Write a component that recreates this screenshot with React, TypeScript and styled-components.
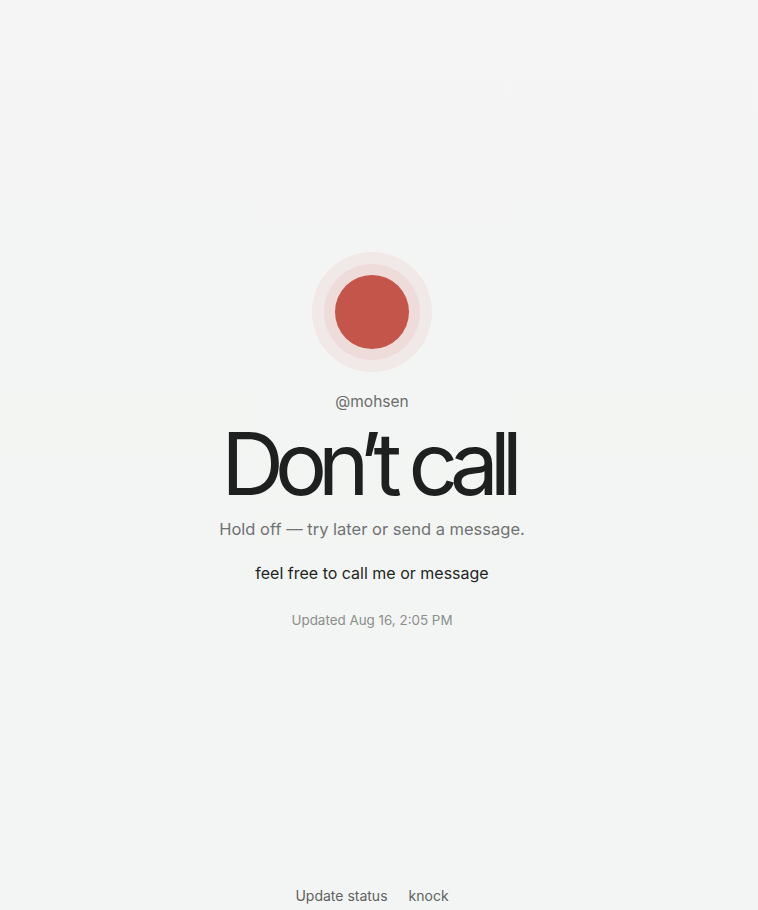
import { createGlobalStyle } from "styled-components";
import styled from "styled-components";

const GlobalStyle = createGlobalStyle`
  html, body {
    margin: 0;
    padding: 0;
    background: #f3f5f4;
  }
  body {
    font-family: Inter, "Noto Sans", sans-serif;
    -webkit-font-smoothing: antialiased;
  }
`;

const Page = styled.div`
  min-height: 910px;
  box-sizing: border-box;
  padding-right: 14px;
  display: flex;
  flex-direction: column;
  background: linear-gradient(180deg, #f4f5f4 0%, #f2f5f3 100%);
`;

const Main = styled.main`
  flex: 1;
  display: flex;
  flex-direction: column;
  align-items: center;
  justify-content: center;
  text-align: center;
  padding-bottom: 6px;
`;

const Halo = styled.div`
  width: 120px;
  height: 120px;
  border-radius: 50%;
  background: #f0e9e8;
  display: flex;
  align-items: center;
  justify-content: center;
`;

const Ring = styled.div`
  width: 96px;
  height: 96px;
  border-radius: 50%;
  background: #eedcdb;
  display: flex;
  align-items: center;
  justify-content: center;
`;

const Dot = styled.div<{ $color: string }>`
  width: 74px;
  height: 74px;
  border-radius: 50%;
  background: ${(p) => p.$color};
`;

const Handle = styled.div`
  margin-top: 21px;
  font-size: 15.5px;
  line-height: 18px;
  color: #6a6d6b;
`;

const Title = styled.h1`
  margin: 9px 0 0;
  font-size: 87px;
  font-weight: 430;
  letter-spacing: -0.104em;
  line-height: 1;
  color: #1d201e;
  padding-right: 0.104em;
`;

const Subtitle = styled.p`
  margin: 12px 0 0;
  font-size: 16.5px;
  color: #707371;
`;

const Note = styled.p`
  margin: 24px 0 0;
  font-size: 16px;
  color: #232524;
`;

const Updated = styled.p`
  margin: 29px 0 0;
  font-size: 13.4px;
  color: #8b8e8c;
`;

const Footer = styled.footer`
  display: flex;
  justify-content: center;
  gap: 21px;
  padding-bottom: 4px;
`;

const FooterLink = styled.a`
  font-size: 14px;
  color: #5f6260;
  text-decoration: none;
  line-height: 20px;
  cursor: pointer;
`;

export default function App() {
  return (
    <>
      <GlobalStyle />
      <Page>
        <Main>
          <Halo>
            <Ring>
              <Dot $color="#c4554a" />
            </Ring>
          </Halo>
          <Handle>@mohsen</Handle>
          <Title>Don’t call</Title>
          <Subtitle>Hold off — try later or send a message.</Subtitle>
          <Note>feel free to call me or message</Note>
          <Updated>Updated Aug 16, 2:05 PM</Updated>
        </Main>
        <Footer>
          <FooterLink>Update status</FooterLink>
          <FooterLink>knock</FooterLink>
        </Footer>
      </Page>
    </>
  );
}
